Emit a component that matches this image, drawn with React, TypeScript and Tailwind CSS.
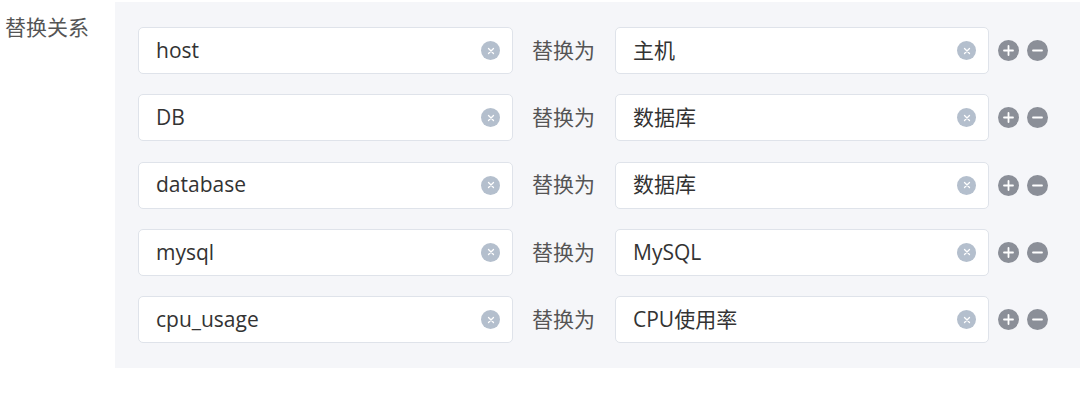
const rows = [
  { from: "host", to: "主机" },
  { from: "DB", to: "数据库" },
  { from: "database", to: "数据库" },
  { from: "mysql", to: "MySQL" },
  { from: "cpu_usage", to: "CPU使用率" },
];

const font = { fontFamily: "'Open Sans', 'Noto Sans CJK SC', sans-serif" };

function ClearIcon() {
  return (
    <span className="flex h-[19px] w-[19px] items-center justify-center rounded-full bg-[#b4bfcd]">
      <svg width="8" height="8" viewBox="0 0 8 8">
        <path d="M1.5 1.5L6.5 6.5M6.5 1.5L1.5 6.5" stroke="#fff" strokeWidth="1.3" strokeLinecap="round" />
      </svg>
    </span>
  );
}

function RoundButton({ plus }: { plus?: boolean }) {
  return (
    <span className="flex h-[21px] w-[21px] items-center justify-center rounded-full bg-[#8b8f98]">
      <svg width="11" height="11" viewBox="0 0 11 11">
        <path d="M1 5.5H10" stroke="#fff" strokeWidth="1.8" strokeLinecap="round" />
        {plus && <path d="M5.5 1V10" stroke="#fff" strokeWidth="1.8" strokeLinecap="round" />}
      </svg>
    </span>
  );
}

function Field({ value, width }: { value: string; width: string }) {
  return (
    <div
      className={`flex h-[47px] ${width} items-center justify-between rounded-[5px] border border-[#dfe3ea] bg-white pl-[17px] pr-[12px]`}
    >
      <span className="text-[21px] text-[#333]">{value}</span>
      <ClearIcon />
    </div>
  );
}

export default function App() {
  return (
    <div className="flex h-[398px] w-[1080px] bg-white" style={font}>
      <div className="w-[115px] pl-[5px] pt-[12px] text-[21px] text-[#555]">替换关系</div>
      <div className="mt-[2px] flex h-[366px] flex-1 flex-col gap-[20.25px] bg-[#f5f6f9] pl-[23px] pt-[25px]">
        {rows.map((r, i) => (
          <div key={i} className="flex items-center">
            <Field value={r.from} width="w-[375px]" />
            <span className="ml-[19px] mr-[20px] text-[21px] text-[#555]">替换为</span>
            <Field value={r.to} width="w-[374px]" />
            <div className="ml-[9px] flex gap-[8px]">
              <RoundButton plus />
              <RoundButton />
            </div>
          </div>
        ))}
      </div>
    </div>
  );
}
